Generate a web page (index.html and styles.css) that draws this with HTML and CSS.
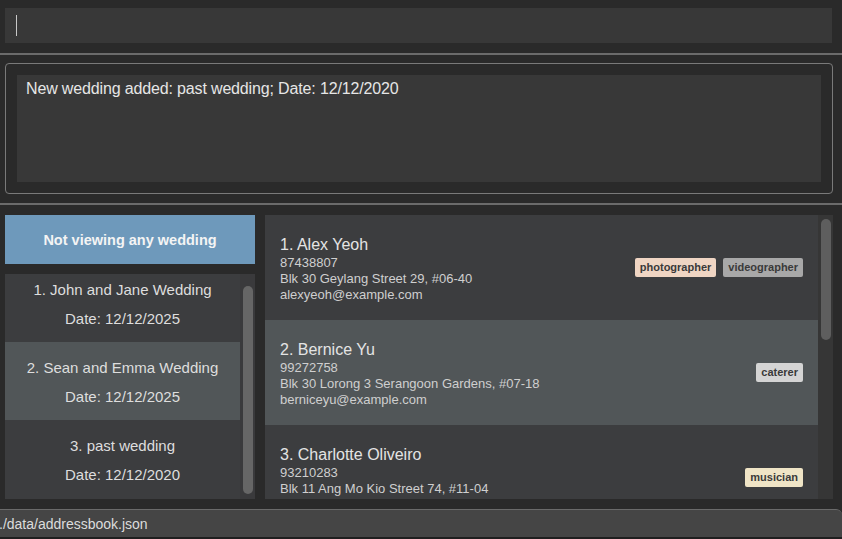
FILE: index.html
```html
<!DOCTYPE html>
<html>
<head>
<meta charset="utf-8">
<link rel="stylesheet" href="styles.css">
</head>
<body>
<div class="app">
  <div class="cmd-pane">
    <div class="cmd-box"><span class="caret"></span></div>
  </div>
  <div class="divider"></div>
  <div class="result-pane">
    <div class="result-frame">
      <div class="result-box">New wedding added: past wedding; Date: 12/12/2020</div>
    </div>
  </div>
  <div class="divider"></div>
  <div class="main">
    <div class="left">
      <div class="wed-header">Not viewing any wedding</div>
      <div class="wed-list">
        <div class="wed-items">
          <div class="wed-item">
            <div class="wed-line">1. John and Jane Wedding</div>
            <div class="wed-line">Date: 12/12/2025</div>
          </div>
          <div class="wed-item selected">
            <div class="wed-line">2. Sean and Emma Wedding</div>
            <div class="wed-line">Date: 12/12/2025</div>
          </div>
          <div class="wed-item">
            <div class="wed-line">3. past wedding</div>
            <div class="wed-line">Date: 12/12/2020</div>
          </div>
        </div>
        <div class="track track-left"><div class="thumb thumb-left"></div></div>
      </div>
    </div>
    <div class="right">
      <div class="cards">
        <div class="card">
          <div class="info">
            <div class="name">1. Alex Yeoh</div>
            <div class="detail">87438807</div>
            <div class="detail">Blk 30 Geylang Street 29, #06-40</div>
            <div class="detail">alexyeoh@example.com</div>
          </div>
          <div class="tags">
            <span class="tag tag-photo">photographer</span>
            <span class="tag tag-video">videographer</span>
          </div>
        </div>
        <div class="card selected">
          <div class="info">
            <div class="name">2. Bernice Yu</div>
            <div class="detail">99272758</div>
            <div class="detail">Blk 30 Lorong 3 Serangoon Gardens, #07-18</div>
            <div class="detail">berniceyu@example.com</div>
          </div>
          <div class="tags">
            <span class="tag tag-cater">caterer</span>
          </div>
        </div>
        <div class="card">
          <div class="info">
            <div class="name">3. Charlotte Oliveiro</div>
            <div class="detail">93210283</div>
            <div class="detail">Blk 11 Ang Mo Kio Street 74, #11-04</div>
            <div class="detail detail-spacer"></div>
          </div>
          <div class="tags">
            <span class="tag tag-music">musician</span>
          </div>
        </div>
      </div>
      <div class="track track-right"><div class="thumb thumb-right"></div></div>
    </div>
  </div>
  <div class="status">./data/addressbook.json</div>
</div>
</body>
</html>
```
FILE: styles.css
```css
html, body {
  margin: 0;
  padding: 0;
  background: #2a2a2a;
}
body {
  font-family: "Liberation Sans", Arial, sans-serif;
  width: 842px;
  height: 539px;
  overflow: hidden;
}
.app {
  display: flex;
  flex-direction: column;
  height: 539px;
}
.cmd-pane {
  padding: 8px 10px 10px 5px;
}
.cmd-box {
  height: 35px;
  background: #383838;
  display: flex;
  align-items: center;
  padding-left: 11px;
  box-sizing: border-box;
}
.caret {
  width: 1px;
  height: 21px;
  background: #c8c8c8;
}
.divider {
  height: 2px;
  background: #6b6b6b;
}
.result-pane {
  padding: 8px 9px 9px 5px;
}
.result-frame {
  border: 1px solid #7a7a7a;
  border-radius: 4px;
  padding: 11px;
  height: 131px;
  box-sizing: border-box;
}
.result-box {
  background: #383838;
  height: 107px;
  padding: 5px 9px;
  box-sizing: border-box;
  color: #e6e6e6;
  font-size: 16px;
  line-height: 18px;
  letter-spacing: -0.15px;
}
.main {
  flex: 1;
  display: flex;
  gap: 10px;
  padding: 10px 9px 10px 5px;
  min-height: 0;
}
.left {
  width: 250px;
  display: flex;
  flex-direction: column;
  gap: 10px;
}
.wed-header {
  height: 49px;
  flex: none;
  background: #6e99bb;
  color: #f4f4f4;
  font-weight: bold;
  font-size: 14.5px;
  display: flex;
  align-items: center;
  justify-content: center;
}
.wed-list {
  flex: 1;
  display: flex;
  overflow: hidden;
  min-height: 0;
}
.wed-items {
  flex: 1;
  margin-top: -10px;
  background: #3c3d3f;
}
.wed-item {
  background: #3c3d3f;
  padding: 11px 0 9px;
  text-align: center;
  color: #dedede;
  font-size: 15px;
  line-height: 29px;
}
.wed-item.selected {
  background: #515658;
}
.track {
  width: 15px;
  flex: none;
  box-sizing: border-box;
}
.track-left {
  background: #3a3a3c;
  padding: 12px 2px 4px 3px;
}
.thumb {
  background: #666666;
  border-radius: 5px;
  width: 10px;
}
.thumb-left {
  height: 208px;
}
.right {
  flex: 1;
  display: flex;
  overflow: hidden;
}
.cards {
  flex: 1;
  overflow: hidden;
}
.card {
  height: 105px;
  box-sizing: border-box;
  background: #3c3d3f;
  display: flex;
  align-items: center;
  padding: 0 15px 0 15px;
}
.card.selected {
  background: #515658;
}
.info {
  flex: 1;
  padding-top: 3px;
}
.name {
  color: #e4e4e4;
  font-size: 16px;
  line-height: 20px;
}
.detail {
  color: #cfcfcf;
  font-size: 13px;
  line-height: 16.3px;
}
.detail-spacer {
  height: 16.3px;
}
.tags {
  display: flex;
  gap: 7px;
}
.tag {
  font-size: 11px;
  font-weight: bold;
  color: #3a3a3a;
  line-height: 13px;
  padding: 3px 5px 3px 5px;
  border-radius: 2px;
}
.tag-photo { background: #efd5c3; }
.tag-video { background: #a8a8a8; }
.tag-cater { background: #d4d4d4; }
.tag-music { background: #efe4c6; }
.track-right {
  background: #363636;
  padding: 4px 2px 0 3px;
}
.thumb-right {
  height: 121px;
  background: #5e5e5e;
}
.status {
  height: 30px;
  flex: none;
  box-sizing: border-box;
  background: #454545;
  border-top: 1px solid #6a6a6a;
  border-top-right-radius: 6px;
  border-bottom: 2px solid #1f1f1f;
  color: #dcdcdc;
  font-size: 14px;
  line-height: 28px;
  text-indent: -1px;
}
```
